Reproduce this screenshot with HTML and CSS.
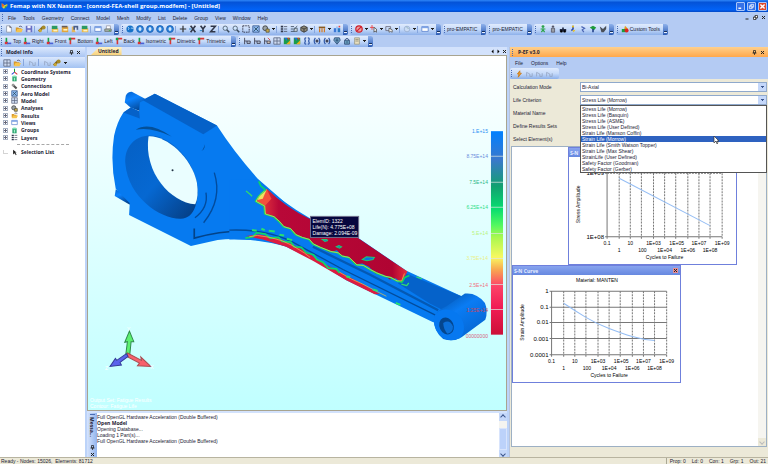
FILE: index.html
```html
<!DOCTYPE html>
<html lang="en">
<head>
<meta charset="utf-8">
<title>Femap with NX Nastran</title>
<link rel="stylesheet" href="styles.css">
</head>
<body>
<svg class="defs" aria-hidden="true">
  <symbol id="new" viewBox="0 0 10 10"><path d="M2 1h4l2 2v6H2z" fill="#fff" stroke="#8a93a8"/><path d="M6 1v2h2" fill="none" stroke="#556"/></symbol>
  <symbol id="open" viewBox="0 0 10 10"><path d="M1 3h3l1 1h3v4H1z" fill="#d99a2b"/><path d="M3 5h7L8 9H1z" fill="#f6c44e"/><path d="M5 2q3-2 4 1" fill="none" stroke="#557"/></symbol>
  <symbol id="save" viewBox="0 0 10 10"><path d="M1 1h8v8H1z" fill="#6a6fc4"/><path d="M3 1h4v3H3z" fill="#eef"/><path d="M3 6h4v3H3z" fill="#dde"/></symbol>
  <symbol id="key" viewBox="0 0 10 10"><path d="M1 8l5-5" stroke="#80641a" stroke-width="3"/><circle cx="7" cy="3" r="2.5" fill="#a58a2a"/><circle cx="3" cy="7" r="2" fill="#c8a838"/></symbol>
  <symbol id="boxg" viewBox="0 0 10 10"><path d="M1 4h8v5H1z" fill="#e9b84c"/><path d="M1 1h7v4H1z" fill="#2d9a62"/><path d="M3 6h5v2H3z" fill="#fff3c0"/></symbol>
  <symbol id="boxy" viewBox="0 0 10 10"><path d="M1 2h8v7H1z" fill="#e2a63c"/><path d="M1 1h7v2H1z" fill="#685c58"/><path d="M3 5h5v2H3z" fill="#fff3c0"/></symbol>
  <symbol id="boxb" viewBox="0 0 10 10"><path d="M1 2h5v7H1z" fill="#e2b65c"/><path d="M3 1h6v5H3z" fill="#4a5f8c"/><path d="M5 3h2v5H5z" fill="#dde6fa"/></symbol>
  <symbol id="window" viewBox="0 0 10 10"><path d="M1 2h8v6H1z" fill="#fff" stroke="#5a82cf"/><path d="M1 2h8v2H1z" fill="#7fa4e6"/></symbol>
  <symbol id="print" viewBox="0 0 10 10"><path d="M3 1h5v4H3z" fill="#fff" stroke="#99a"/><path d="M1 5h8v3H1z" fill="#aab2ab" stroke="#69726c"/><path d="M6 7h2" stroke="#3a3"/></symbol>
  <symbol id="globe" viewBox="0 0 10 10"><circle cx="5" cy="5" r="4.5" fill="#1672c8"/><path d="M2 2q3 2 1 4M6 4q3-1 3 1" stroke="#bfe0ff" fill="none"/></symbol>
  <symbol id="nav" viewBox="0 0 10 10"><circle cx="5" cy="5" r="4.3" fill="#2c84dc" stroke="#1a5db0"/><path d="M5 2.500v5M3 5h4" stroke="#fff" stroke-width="1.500"/></symbol>
  <symbol id="plus" viewBox="0 0 10 10"><path d="M5 1v8M1 5h8" stroke="#333" stroke-width="1.500"/></symbol>
  <symbol id="axx" viewBox="0 0 10 10"><path d="M2 1l6 8M8 1L2 9" stroke="#303648" stroke-width="2"/><path d="M0 5h3" stroke="#17b"/></symbol>
  <symbol id="axy" viewBox="0 0 10 10"><path d="M2 1l3 4 3-4M5 5v4" stroke="#303648" stroke-width="2" fill="none"/><path d="M1 7h3" stroke="#17b"/></symbol>
  <symbol id="axz" viewBox="0 0 10 10"><path d="M2 1.500h6l-6 7h6" stroke="#303648" stroke-width="2" fill="none"/></symbol>
  <symbol id="zoom" viewBox="0 0 10 10"><circle cx="4" cy="4" r="2.700" fill="#cfe6ff" stroke="#456"/><path d="M6 6l3 3" stroke="#3a4a5c" stroke-width="2"/></symbol>
  <symbol id="dash" viewBox="0 0 10 10"><path d="M1 1h8v8H1z" fill="none" stroke="#223" stroke-dasharray="2 1"/></symbol>
  <symbol id="fit" viewBox="0 0 10 10"><path d="M1 1h8v8H1z" fill="#8db8ee" stroke="#3a5a92"/><path d="M2 8l6-6M3 3l5 5" stroke="#245"/></symbol>
  <symbol id="mag" viewBox="0 0 10 10"><circle cx="4" cy="4" r="3" fill="#9ba4a8" stroke="#333"/><path d="M5 5h4v4H5z" fill="#c9a84a" stroke="#554"/></symbol>
  <symbol id="list" viewBox="0 0 10 10"><path d="M1 2h3M1 5h3M1 8h3" stroke="#30384c" stroke-width="2"/><path d="M5 2h4M5 5h4M5 8h4" stroke="#4a5266"/></symbol>
  <symbol id="edit" viewBox="0 0 10 10"><path d="M1 2h4M1 5h3M1 8h5" stroke="#345"/><path d="M5 6l4-5M5 4h4v4H5z" stroke="#456" fill="#cfd8df"/></symbol>
  <symbol id="cube" viewBox="0 0 10 10"><path d="M5 1l4 2v4L5 9 1 7V3z" fill="#8f8a78" stroke="#333"/><path d="M1 3l4 2 4-2M5 5v4" stroke="#333" fill="none"/></symbol>
  <symbol id="table" viewBox="0 0 10 10"><path d="M1 2h8v2H1z" fill="#8a5a20"/><path d="M2 4v5M5 4v5M8 4v5" stroke="#d27a24" stroke-width="1.500"/></symbol>
  <symbol id="bars" viewBox="0 0 10 10"><path d="M1 4h3v5H1z" fill="#3b78d8"/><path d="M4 2h2v7H4z" fill="#8fbdf6"/><path d="M6 4h3v5H6z" fill="#2878c4"/><path d="M7 1h2v2H7z" fill="#e44"/></symbol>
  <symbol id="ban" viewBox="0 0 10 10"><circle cx="5" cy="5" r="4" fill="#e9a0a0" stroke="#d01f2c" stroke-width="1.500"/><path d="M2 8l6-6" stroke="#d01f2c" stroke-width="1.500"/></symbol>
  <symbol id="pick" viewBox="0 0 10 10"><path d="M0 3h5M2.500 0v6" stroke="#e33"/><path d="M5 3v6l1.500-1.500L8 9V5z" fill="#fff" stroke="#444"/></symbol>
  <symbol id="sel" viewBox="0 0 10 10"><path d="M1 2h6v5H1z" fill="none" stroke="#667"/><path d="M5 4v5l2-1 2 1V6z" fill="#fff" stroke="#555"/></symbol>
  <symbol id="dim" viewBox="0 0 10 10"><circle cx="5" cy="5" r="3.500" fill="#cbdcf5" stroke="#97add0"/><path d="M4 2l3 3" stroke="#8aa"/></symbol>
  <symbol id="man" viewBox="0 0 10 10"><circle cx="5" cy="2" r="1.800" fill="#2aa34a"/><path d="M5 4v3M2 5h6M3 9l2-3 2 3" stroke="#2aa34a" stroke-width="1.500" fill="none"/></symbol>
  <symbol id="mang" viewBox="0 0 10 10"><circle cx="5" cy="2" r="1.500" fill="#556"/><path d="M3 4h4v5H3z" fill="#9aa0a8" stroke="#556"/></symbol>
  <symbol id="car" viewBox="0 0 10 10"><path d="M1 5h3V3h2v2h3v3H1z" fill="#1f2740"/><circle cx="3" cy="8" r="1.500"/><circle cx="7" cy="8" r="1.500"/></symbol>
  <symbol id="run" viewBox="0 0 10 10"><path d="M5 1v4L3 7" stroke="#2c49a8" stroke-width="2" fill="none"/><path d="M4 7l4-1-2 3z" fill="#e8c020"/><circle cx="5" cy="2" r="1.300" fill="#e8c020"/></symbol>
  <symbol id="fig" viewBox="0 0 10 10"><path d="M3 2l4 2-3 2 2 3" stroke="#4c66b4" stroke-width="1.500" fill="none"/></symbol>
  <symbol id="tree" viewBox="0 0 10 10"><path d="M1 3l4-2 4 2-3 4z" fill="#1f9c3c"/><path d="M5 5v4" stroke="#24408c" stroke-width="2"/></symbol>
  <symbol id="cat" viewBox="0 0 10 10"><path d="M1 2l4 3 4-4v4L6 9H3z" fill="#4a4f58"/></symbol>
  <symbol id="custom" viewBox="0 0 10 10"><path d="M1 5h5v4H1z" fill="#1f9c3c"/><path d="M5 1l4 4H4z" fill="#e0a020"/><circle cx="7" cy="7" r="2.500" fill="#d22"/></symbol>
  <symbol id="view" viewBox="0 0 10 10"><path d="M3 7V1" stroke="#17a34a" stroke-width="2"/><path d="M1 6h4v3H1z" fill="#d93636"/><path d="M4 8h5" stroke="#4a62d6" stroke-width="2"/></symbol>
  <symbol id="view2" viewBox="0 0 10 10"><path d="M2 2h7M3 2v7" stroke="#d93636" stroke-width="2"/><path d="M1 1h3v3H1z" fill="#17a34a"/></symbol>
  <symbol id="fem" viewBox="0 0 10 10"><path d="M2 1v8M2 5h3" stroke="#334" fill="none"/><path d="M5 5h4v3H5z" fill="#b5c3da" stroke="#334"/></symbol>
  <symbol id="femr" viewBox="0 0 10 10"><path d="M2 1v8M2 5h3" stroke="#334" fill="none"/><path d="M5 5h4v3H5z" fill="#dcb" stroke="#334"/><path d="M6 1l3 3" stroke="#d33"/></symbol>
  <symbol id="grid" viewBox="0 0 10 10"><path d="M1 1h8v8H1zM1 5h8M5 1v8" fill="#cfdcf2" stroke="#5b667e"/></symbol>
  <symbol id="contour" viewBox="0 0 10 10"><path d="M1 1h8v8H1z" fill="#1a9c4c"/><path d="M1 1h4v4z" fill="#2468dc"/><path d="M9 9H4l5-5z" fill="#e8b020"/><path d="M5 1h3v3z" fill="#e33"/></symbol>
  <symbol id="braces" viewBox="0 0 10 10"><path d="M4 1Q1 1 3 5 1 9 4 9M6 1q3 0 1 4 2 4-1 4" stroke="#2f58a8" stroke-width="1.500" fill="none"/></symbol>
  <symbol id="braces2" viewBox="0 0 10 10"><path d="M3 1Q0 5 3 9M7 1q3 4 0 8" stroke="#2f58a8" stroke-width="1.500" fill="none"/><path d="M3 5h4M5 3v4" stroke="#223" stroke-width="1.500"/></symbol>
  <symbol id="shield" viewBox="0 0 10 10"><path d="M2 1h6l1 3-4 5-4-5z" fill="#6ea6c4" stroke="#2a4470"/><path d="M3 4h4M5 2v5" stroke="#2a4470"/></symbol>
  <symbol id="lock" viewBox="0 0 10 10"><path d="M3 5V3q2-3 4 0v2" fill="none" stroke="#2a4470"/><path d="M2 4h6v5H2z" fill="#6ea6c4" stroke="#2a4470"/><path d="M5 5v3" stroke="#2a4470"/></symbol>
  <symbol id="doc" viewBox="0 0 10 10"><path d="M2 1h6v8H2z" fill="#e9dfbd" stroke="#998"/><path d="M3 3h4M3 5h4" stroke="#887"/></symbol>
  <symbol id="axes" viewBox="0 0 10 10"><path d="M5 6V1" stroke="#18a038" stroke-width="1.500"/><path d="M5 6L1 9" stroke="#2448d8" stroke-width="1.500"/><path d="M5 6l4 3" stroke="#d82c2c" stroke-width="1.500"/></symbol>
  <symbol id="geo" viewBox="0 0 10 10"><path d="M2 2h6v7H2z" fill="#23a06a"/><ellipse cx="5" cy="2" rx="3" ry="1.200" fill="#7fe0b4"/><path d="M4 4h2v4H4z" fill="#a6f0cc"/></symbol>
  <symbol id="conn" viewBox="0 0 10 10"><path d="M2 2l6 6" stroke="#555" stroke-width="3"/><circle cx="3" cy="3" r="2" fill="#999"/></symbol>
  <symbol id="arrow" viewBox="0 0 10 10"><path d="M3 1v7l2-2 2 3 1-1-2-3h2z" fill="#222"/></symbol>
  <symbol id="bolt" viewBox="0 0 10 10"><path d="M6 1L3 5h2L4 9l4-5H6z" fill="#f0a030" stroke="#c87818"/></symbol>
  <symbol id="ghost" viewBox="0 0 10 10"><path d="M2 8V3l4 2v3M6 8h3V4" fill="none" stroke="#94a3c0"/></symbol>
  <symbol id="pin" viewBox="0 0 10 10"><path d="M3 1h4v5H3zM1 6h8M5 6v4" fill="none" stroke="#222" stroke-width="1.500"/></symbol>
  <symbol id="close" viewBox="0 0 10 10"><path d="M2 2l6 6M8 2L2 8" stroke="#222" stroke-width="2"/></symbol>
  <symbol id="min" viewBox="0 0 10 10"><path d="M1 8h6" stroke="#222" stroke-width="2"/></symbol>
  <symbol id="restore" viewBox="0 0 10 10"><path d="M4 1h5v5H4zM1 4h5v5H1z" fill="#fff" stroke="#222" stroke-width="1.500"/></symbol>
</svg>

<header class="titlebar">
  <svg class="logo" viewBox="0 0 10 10" aria-hidden="true"><path d="M1 1l4 3 4-2v3L4 9 1 6z" fill="#d8d23c"/><path d="M1 1l4 3-3 3z" fill="#e85c2c"/><path d="M5 6l4-2-3 5z" fill="#38a04c"/></svg>
  <h1>Femap with NX Nastran - [conrod-FEA-shell group.modfem] - [Untitled]</h1>
  <div class="winbtns">
    <button aria-label="Minimize"><svg viewBox="0 0 10 10"><path d="M2 7.500h4" stroke="#fff" stroke-width="2"/></svg></button>
    <button aria-label="Restore"><svg viewBox="0 0 10 10"><path d="M4 2h4v4H4zM2 4h4v4H2z" fill="none" stroke="#fff"/></svg></button>
    <button class="shut" aria-label="Close"><svg viewBox="0 0 10 10"><path d="M2 2l6 6M8 2L2 8" stroke="#fff" stroke-width="2"/></svg></button>
  </div>
</header>

<nav class="menubar">
  <i class="grip"></i>
  <a href="#">File</a><a href="#">Tools</a><a href="#">Geometry</a><a href="#">Connect</a><a href="#">Model</a><a href="#">Mesh</a><a href="#">Modify</a><a href="#">List</a><a href="#">Delete</a><a href="#">Group</a><a href="#">View</a><a href="#">Window</a><a href="#">Help</a>
  <div class="docbtns"><button aria-label="Minimize document"><svg><use href="#min"/></svg></button><button aria-label="Restore document"><svg><use href="#restore"/></svg></button><button aria-label="Close document"><svg><use href="#close"/></svg></button></div>
</nav>

<div class="toolrow">
  <div class="toolbar"><i class="grip"></i>
    <button aria-label="New"><svg><use href="#new"/></svg></button><button aria-label="Open"><svg><use href="#open"/></svg></button><button aria-label="Save"><svg><use href="#save"/></svg></button><i class="sep"></i>
    <button aria-label="Key"><svg><use href="#key"/></svg></button><i class="sep"></i>
    <button aria-label="Import"><svg><use href="#boxg"/></svg></button><button aria-label="Export"><svg><use href="#boxy"/></svg></button><button aria-label="Analyze"><svg><use href="#boxb"/></svg></button><button aria-label="Results"><svg><use href="#boxg"/></svg></button><i class="sep"></i>
    <button aria-label="Copy window"><svg><use href="#window"/></svg></button><button aria-label="Print"><svg><use href="#print"/></svg></button><i class="cap"></i>
  </div>
  <div class="toolbar"><i class="grip"></i>
    <button aria-label="Dynamic rotate"><svg><use href="#globe"/></svg></button><button aria-label="Rotate up"><svg><use href="#nav"/></svg></button><button aria-label="Rotate down"><svg><use href="#nav"/></svg></button><button aria-label="Rotate left"><svg><use href="#nav"/></svg></button><button aria-label="Rotate right"><svg><use href="#nav"/></svg></button><i class="sep"></i>
    <button aria-label="Pan"><svg><use href="#plus"/></svg></button><button aria-label="X axis"><svg><use href="#axx"/></svg></button><button aria-label="Y axis"><svg><use href="#axy"/></svg></button><button aria-label="Z axis"><svg><use href="#axz"/></svg></button><i class="sep"></i>
    <button aria-label="Zoom in"><svg><use href="#zoom"/></svg></button><button aria-label="Zoom out"><svg><use href="#zoom"/></svg></button><button aria-label="Zoom box"><svg><use href="#dash"/></svg></button><button aria-label="Fit"><svg><use href="#fit"/></svg></button><button aria-label="Style"><svg><use href="#mag"/></svg></button><i class="drop"></i><i class="sep"></i>
    <button aria-label="List"><svg><use href="#list"/></svg></button><button aria-label="Edit"><svg><use href="#edit"/></svg></button><button aria-label="Solid"><svg><use href="#cube"/></svg></button><i class="drop"></i><i class="sep"></i>
    <button aria-label="Table"><svg><use href="#table"/></svg></button><i class="drop"></i><button aria-label="Chart"><svg><use href="#bars"/></svg></button><i class="cap"></i>
  </div>
  <div class="toolbar"><i class="grip"></i>
    <button aria-label="Select none"><svg><use href="#ban"/></svg></button><i class="drop"></i><button aria-label="Add to selection"><svg><use href="#pick"/></svg></button><i class="drop"></i><button aria-label="Select mode"><svg><use href="#sel"/></svg></button><i class="drop"></i><i class="sep"></i>
    <button aria-label="Filter"><svg><use href="#dim"/></svg></button><i class="drop"></i><i class="sep"></i>
    <button aria-label="Snap window"><svg><use href="#window"/></svg></button><i class="drop"></i><i class="cap"></i>
  </div>
  <div class="toolbar"><i class="grip"></i><button class="text">pro-EMPATIC</button><i class="cap"></i></div>
  <div class="toolbar"><i class="grip"></i><button class="text">pro-EMPATIC</button><i class="cap"></i></div>
  <div class="toolbar"><i class="grip"></i>
    <button aria-label="Start"><svg><use href="#man"/></svg></button><button aria-label="Stand"><svg><use href="#mang"/></svg></button><button aria-label="Drive"><svg><use href="#car"/></svg></button><button aria-label="Run"><svg><use href="#run"/></svg></button><button aria-label="Step"><svg><use href="#fig"/></svg></button><button aria-label="Tree"><svg><use href="#tree"/></svg></button><button aria-label="Clean"><svg><use href="#cat"/></svg></button><i class="cap"></i>
  </div>
  <div class="toolbar"><i class="grip"></i><button class="label"><svg><use href="#custom"/></svg>Custom Tools</button><i class="cap"></i></div>
</div>

<div class="toolrow">
  <div class="toolbar views"><i class="grip"></i>
    <button class="label"><svg><use href="#view"/></svg>Top</button><button class="label"><svg><use href="#view"/></svg>Right</button><button class="label"><svg><use href="#view"/></svg>Front</button><button class="label"><svg><use href="#view2"/></svg>Bottom</button><button class="label"><svg><use href="#view"/></svg>Left</button><button class="label"><svg><use href="#view2"/></svg>Back</button><button class="label"><svg><use href="#view"/></svg>Isometric</button><button class="label"><svg><use href="#view2"/></svg>Dimetric</button><button class="label"><svg><use href="#view2"/></svg>Trimetric</button><i class="cap"></i>
  </div>
  <div class="toolbar"><i class="grip"></i>
    <button aria-label="Constraint"><svg><use href="#fem"/></svg></button><button aria-label="Load"><svg><use href="#fem"/></svg></button><button aria-label="Delete load"><svg><use href="#femr"/></svg></button><button aria-label="Mesh"><svg><use href="#grid"/></svg></button><button aria-label="Contour"><svg><use href="#contour"/></svg></button><button aria-label="Criteria"><svg><use href="#contour"/></svg></button><button aria-label="Braces"><svg><use href="#braces"/></svg></button><button aria-label="Node"><svg><use href="#braces2"/></svg></button><button aria-label="Element"><svg><use href="#braces2"/></svg></button><button aria-label="Check"><svg><use href="#shield"/></svg></button><button aria-label="Lock"><svg><use href="#lock"/></svg></button><button aria-label="Report"><svg><use href="#doc"/></svg></button><i class="drop"></i><i class="cap"></i>
  </div>
</div>

<main class="workspace">
  <aside class="info">
    <header class="panehead"><i class="grip"></i><h2>Model Info</h2><button aria-label="Pin"><svg><use href="#pin"/></svg></button><button aria-label="Close"><svg><use href="#close"/></svg></button></header>
    <div class="infotools">
      <button aria-label="Tree view"><svg><use href="#grid"/></svg></button><button aria-label="Folder"><svg><use href="#open"/></svg></button><i class="sep"></i><button aria-label="Copy"><svg><use href="#ghost"/></svg></button><i class="sep"></i><button aria-label="Next"><svg><use href="#ghost"/></svg></button><button aria-label="Highlight"><svg><use href="#key"/></svg></button><i class="drop"></i>
    </div>
    <ul class="tree">
      <li><i class="exp"></i><svg><use href="#axes"/></svg>Coordinate Systems</li>
      <li><i class="exp"></i><svg><use href="#geo"/></svg>Geometry</li>
      <li><i class="exp"></i><svg><use href="#conn"/></svg>Connections</li>
      <li><i class="exp"></i><svg><use href="#fit"/></svg>Aero Model</li>
      <li><i class="exp"></i><svg><use href="#grid"/></svg>Model</li>
      <li><i class="exp"></i><svg><use href="#mag"/></svg>Analyses</li>
      <li><i class="exp"></i><svg><use href="#open"/></svg>Results</li>
      <li><i class="exp"></i><svg><use href="#window"/></svg>Views</li>
      <li><i class="exp"></i><svg><use href="#geo"/></svg>Groups</li>
      <li><i class="exp"></i><svg><use href="#list"/></svg>Layers</li>
      <li class="rule"></li>
      <li><i class="branch"></i><svg><use href="#arrow"/></svg>Selection List</li>
    </ul>
  </aside>

  <section class="center">
    <div class="tabs">
      <button class="tab">Untitled</button>
      <div class="tabnav"><button aria-label="Previous"><svg viewBox="0 0 10 10"><path d="M7 1v8L3 5z"/></svg></button><button aria-label="Next"><svg viewBox="0 0 10 10"><path d="M3 1v8l4-4z"/></svg></button><button aria-label="Close tab"><svg><use href="#close"/></svg></button></div>
    </div>
    <div class="viewport">
      <svg viewBox="89 57 417 353" role="img" aria-label="Fatigue life of the connecting rod">
        <defs>
          <linearGradient id="bore" x1="0" y1="0" x2="1" y2="1"><stop offset="0" stop-color="#0560c4"/><stop offset=".5" stop-color="#0668d2"/><stop offset="1" stop-color="#053a7c"/></linearGradient>
          <linearGradient id="pinf" x1="0" y1="0" x2=".4" y2="1"><stop offset="0" stop-color="#0461cc"/><stop offset=".4" stop-color="#0c83ff"/><stop offset="1" stop-color="#034694"/></linearGradient>
          <linearGradient id="eye" x1="0" y1="0" x2=".7" y2="1"><stop offset="0" stop-color="#044d9e"/><stop offset=".45" stop-color="#0a7cf4"/><stop offset="1" stop-color="#0464d0"/></linearGradient>
          <linearGradient id="legend" x1="0" y1="0" x2="0" y2="1"><stop offset="0" stop-color="#0080ff"/><stop offset=".14" stop-color="#3a78cc"/><stop offset=".27" stop-color="#12a070"/><stop offset=".38" stop-color="#06dc70"/><stop offset=".46" stop-color="#50f860"/><stop offset=".52" stop-color="#a8f850"/><stop offset=".62" stop-color="#f8f860"/><stop offset=".68" stop-color="#f8a850"/><stop offset=".76" stop-color="#fc4468"/><stop offset=".87" stop-color="#f01c54"/><stop offset="1" stop-color="#cc1038"/></linearGradient>
          <linearGradient id="life" x1="0" y1="0" x2="1" y2="0"><stop offset="0" stop-color="#f04440"/><stop offset=".15" stop-color="#b80838"/><stop offset=".9" stop-color="#b00432"/><stop offset="1" stop-color="#e83040"/></linearGradient>
        </defs>
        <g transform="translate(85 50) scale(.333333)">
          <path d="M125 140Q130 128 143 128L187 151 180 190 140 176 122 160Z" fill="url(#pinf)"/>
          <path d="M95 420L140 445 137 466 92 440Z" fill="url(#pinf)"/>
          <path d="M118 190L140 175 165 186 167 160 212 134 398 229Q450 310 520 388L640 492 800 620 660 600 600 590Q480 560 400 572L320 590 135 497 137 462 95 418Q78 340 90 260Q98 220 118 190Z" fill="#067af0"/>
          <path d="M175 153L212 134 398 229 357 255Z" fill="#0561c8"/>
          <path d="M118 190L140 175 165 186 167 208Z" fill="#0561c8"/>
          <path d="M155 242Q195 215 262 262Q200 232 155 242Z" fill="#045099"/>
          <path d="M357 281q8 10-5 24 16-8 5-24Z" fill="#04468c"/>
          <path d="M390 370Q415 450 358 520M365 430Q373 475 332 505" stroke="#034b9b" stroke-width="4" fill="none"/>
          <path d="M188 260C240 252 318 310 338 400C345 450 333 507 290 508C230 510 133 445 124 345C120 300 145 265 188 260Z" fill="url(#bore)"/>
          <path d="M195 261C245 259 322 322 338 400Q344 440 333 465C260 460 178 370 193 262Z" fill="#eafeff"/>
          <circle cx="265" cy="363" r="3" fill="#234"/>
          <path d="M330 537V566Q440 535 540 549 590 558 660 597" stroke="#034388" stroke-width="5" fill="none"/>
        </g>
        <g transform="translate(230 160) scale(.333333)">
          <path d="M84 62Q160 130 240 176L385 235 530 334 700 412 640 490 610 488 500 435 350 362 250 300 170 262Q110 238 0 240V60Z" fill="#067af0"/>
          <path d="M520 338L700 412 640 452 600 432 505 372Z" fill="#0562ca"/>
          <path d="M0 212Q110 208 190 248L340 330 620 468" stroke="#034c9c" stroke-width="4" fill="none"/>
          <path d="M250 262L420 345 625 452" stroke="#0459b4" stroke-width="7" fill="none"/>
          <path d="M112 88Q170 145 240 178L385 236 533 336 515 370 498 356 480 360 462 346 437 342 418 322 398 312 378 314 355 292 335 288 322 272 300 278 270 262 248 250 236 238 215 232 196 224 180 206 160 200 146 184 128 172 106 164 102 142 80 126 96 114Z" fill="url(#life)"/>
          <path d="M112 90L80 126 104 142 126 118Z" fill="#f4503c"/>
          <path d="M112 90L92 104 84 122 100 118Z" fill="#f0e060"/>
          <g fill="none" stroke-linejoin="bevel">
            <path d="M88 66l6 14 14 12-20 18-10 16 26 14 2 24 26 8 16 14 14 16 20 6 16 18 19 8 21 6 12 14 22 10 30 12 22 4 13 10 20 4 23 22 20 2 20 12 19 10 25 10 18 4 18 10 17 4 8-14 14-6" stroke="#0ad36a" stroke-width="5"/>
            <path d="M106 94l-18 18-8 14 26 14 2 24 26 8 16 14 14 16 20 6 16 18 19 8 21 6 12 14 22 10 30 12 22 4 13 10 20 4 23 22 20 2 20 12 19 10 25 10 18 4 18 10 14 0 8-22" stroke="#f4d850" stroke-width="2"/>
            <path d="M50 95l12 10 6 6M515 374l16 4 6-8M560 352l16 6" stroke="#30d870" stroke-width="4"/>
          </g>
          <path d="M50 230L90 225 150 238 190 255 240 282 262 300 320 332 400 374 450 403 435 404 350 362 250 304 170 262 100 240Z" fill="#dc1c40"/>
          <g fill="none" stroke-linejoin="bevel">
            <path d="M48 236l22-4 12-12 26 4 14 12 26-2 10 12 26 2 10 14 22 2 14 16 22 6 10 14 18 8 16 18 24 2 10 12" stroke="#10d868" stroke-width="5"/>
            <path d="M60 232l24-4 38 6 36 10 30 14 36 22 18 14M330 338l30 18 40 18 50 26 20 10" stroke="#f0c84a" stroke-width="2"/>
            <path d="M68 212l14 2M96 208l10 4M118 214l18 2M150 226l14 2M172 238l16 4M350 350l12 4M430 390l14 4M498 430l14 6" stroke="#28e070" stroke-width="6"/>
          </g>
          <g stroke="#20c870" stroke-width="3" fill="#0874e8"><path d="M398 300l12-8 24 2-4 6-18 4Z"/><path d="M320 262l8-4 8 4-6 4Z"/><path d="M278 240l14 0 2 4-8 2Z"/></g>
          <path d="M612 480Q614 455 650 440L705 402Q740 398 765 430 775 455 766 480L695 533Q670 548 640 538 612 515 612 480Z" fill="url(#eye)"/>
          <path d="M612 480C614 450 650 440 680 460C705 480 710 515 690 536Q650 552 628 524Q612 505 612 480Z" fill="#0678f0"/>
          <ellipse cx="650" cy="499" rx="21" ry="26" transform="rotate(-25 650 499)" fill="#04468e"/>
          <path d="M640 490q20-12 29 10 2 18-16 22-12-12-13-32Z" fill="#0b6fd8"/>
        </g>
        <g transform="translate(85 320) scale(.333333)">
          <path d="M125 105L137 105 141 66 149 66 136 34 122 68 130 66Z" fill="#5cf070" stroke="#2f8c4c" stroke-width="3"/>
          <path d="M130 100L172 122 170 112 200 140 160 138 166 130 128 110Z" fill="#f8606c" stroke="#a84c50" stroke-width="3"/>
          <path d="M127 102L132 110 108 128 112 136 78 140 94 116 98 122Z" fill="#5a62ec" stroke="#343c98" stroke-width="3"/>
        </g>
        <g class="axis"><text x="106" y="370">Z</text><text x="151" y="369">X</text><text x="128" y="331">Y</text><text x="91" y="402">Output Set: Fatigue Results</text><text x="91" y="408">Contour: Fatigue Life</text></g>
        <rect x="491" y="132" width="12" height="203" fill="url(#legend)"/>
        <path d="M491 157h12M491 183h12M491 208h12M491 234h12M491 259h12M491 285h12M491 310h12" stroke="#dfe8e0" stroke-width="1" opacity=".7"/>
        <g class="scale">
          <text x="488" y="134" fill="#2a90f4">1.E+15</text><text x="488" y="159" fill="#6a8cdc">8.75E+14</text><text x="488" y="185" fill="#2cb888">7.5E+14</text><text x="488" y="210" fill="#30e088">6.25E+14</text><text x="488" y="236" fill="#b8f480">5.E+14</text><text x="488" y="261" fill="#eaf088">3.75E+14</text><text x="488" y="287" fill="#f07080">2.5E+14</text><text x="488" y="312" fill="#c04868">1.25E+14</text><text x="488" y="338" fill="#d86080">00000000</text>
        </g>
        <rect x="311" y="217" width="48" height="21" fill="#06063e" stroke="#70708c" stroke-width="1"/>
        <g class="tip"><text x="313" y="224">ElemID: 1322</text><text x="313" y="230">Life(N): 4.775E+08</text><text x="313" y="236">Damage: 2.094E-09</text></g>
      </svg>
    </div>
    <section class="messages">
      <header class="sidehead"><i class="grip"></i><h2>Messa...</h2><button aria-label="Pin"><svg><use href="#pin"/></svg></button><button aria-label="Close"><svg><use href="#close"/></svg></button></header>
      <div class="log"><p>Full OpenGL Hardware Acceleration (Double Buffered)</p><p><b>Open Model</b></p><p>Opening Database...</p><p>Loading 1 Part(s)...</p><p>Full OpenGL Hardware Acceleration (Double Buffered)</p></div>
      <div class="scroll"><i class="up"></i><i class="thumb"></i><i class="down"></i></div>
    </section>
  </section>

  <section class="pef">
    <header class="pefhead"><i class="grip"></i><h2>P-EF v3.0</h2><button aria-label="Pin"><svg><use href="#pin"/></svg></button><button aria-label="Close"><svg><use href="#close"/></svg></button></header>
    <nav class="pefmenu"><a href="#">File</a><a href="#">Options</a><a href="#">Help</a></nav>
    <div class="peftools"><div class="toolbar"><i class="grip"></i><button aria-label="Run"><svg><use href="#bolt"/></svg></button><button aria-label="Plot"><svg><use href="#ghost"/></svg></button><button aria-label="Curve"><svg><use href="#ghost"/></svg></button><button aria-label="Export"><svg><use href="#ghost"/></svg></button></div></div>
    <form class="form">
      <label for="mode">Calculation Mode</label><select id="mode"><option>Bi-Axial</option></select>
      <label for="crit">Life Criterion</label>
      <div class="combo"><select id="crit"><option>Stress Life (Morrow)</option></select>
        <ul class="options" role="listbox" aria-label="Life Criterion">
          <li role="option">Stress Life (Morrow)</li><li role="option">Stress Life (Basquin)</li><li role="option">Stress Life (ASME)</li><li role="option">Stress Life (User Defined)</li><li role="option">Strain Life (Manson Coffin)</li><li role="option" aria-selected="true" class="on">Strain Life (Morrow)</li><li role="option">Strain Life (Smith Watson Topper)</li><li role="option">Strain Life (Max Shear)</li><li role="option">StrainLife (User Defined)</li><li role="option">Safety Factor (Goodman)</li><li role="option">Safety Factor (Gerber)</li>
        </ul>
        <svg class="cursor" viewBox="0 0 7 10" aria-hidden="true"><path d="M1 1v7l2-2 1 3 1-1-1-2h2z" fill="#fff" stroke="#333" stroke-width=".7"/></svg>
      </div>
      <span>Material Name</span><span></span>
      <span>Define Results Sets</span><span></span>
      <span>Select Element(s)</span><span></span>
    </form>
    <div class="desk">
      <div class="canvas">
        <article class="win stress">
          <header><h3>S-N</h3></header>
          <svg viewBox="570 157 164 106" role="img" aria-label="Stress amplitude against cycles to failure">
            <path class="gridline" d="M619 173v63M630 173v63M641 173v63M653 173v63M664 173v63M675 173v63M687 173v63M698 173v63M709 173v63M607 173h114M721 173v63"/>
            <path class="axisline" d="M607 173v63h114M605 173h2M605 236h2M607 236v2M619 236v2M630 236v2M641 236v2M653 236v2M664 236v2M675 236v2M687 236v2M698 236v2M709 236v2M721 236v2"/>
            <path class="curve" d="M619 178L709 225"/>
            <g class="ylab"><text x="604" y="175">1E+09</text><text x="604" y="238">1E+08</text></g>
            <g class="xlab"><text x="607" y="244">0.1</text><text x="630" y="244">10</text><text x="653" y="244">1E+03</text><text x="676" y="244">1E+05</text><text x="698" y="244">1E+07</text><text x="721" y="244">1E+09</text><text x="619" y="251">1</text><text x="642" y="251">100</text><text x="664" y="251">1E+04</text><text x="687" y="251">1E+06</text><text x="709" y="251">1E+08</text></g>
            <text class="name" x="664" y="258">Cycles to Failure</text>
            <text class="name" transform="translate(580 204) rotate(-90)">Stress Amplitude</text>
          </svg>
        </article>
        <article class="win strain">
          <header><h3>S-N Curve</h3><button aria-label="Close chart"><svg><use href="#close"/></svg></button></header>
          <svg viewBox="513 275 165 106" role="img" aria-label="Strain amplitude against cycles to failure">
            <path class="gridline" d="M563 291v63M574 291v63M585 291v63M597 291v63M608 291v63M619 291v63M631 291v63M642 291v63M653 291v63M665 291v63"/>
            <path class="axisline" d="M551 291v63h114M549 291h116M549 307h116M549 322h116M549 338h116M549 354h2M551 354v2M563 354v2M574 354v2M585 354v2M597 354v2M608 354v2M619 354v2M631 354v2M642 354v2M653 354v2M665 354v2"/>
            <path class="curve" d="M563 303Q575 311 585 317T608 328 631 336 653 340"/>
            <text class="name" x="596" y="282">Material: MANTEN</text>
            <g class="ylab"><text x="548" y="293">1</text><text x="548" y="309">0.1</text><text x="548" y="324">0.01</text><text x="548" y="340">0.001</text><text x="548" y="356">0.0001</text></g>
            <g class="xlab"><text x="551" y="362">0.1</text><text x="574" y="362">10</text><text x="597" y="362">1E+03</text><text x="620" y="362">1E+05</text><text x="642" y="362">1E+07</text><text x="665" y="362">1E+09</text><text x="563" y="369">1</text><text x="586" y="369">100</text><text x="608" y="369">1E+04</text><text x="631" y="369">1E+06</text><text x="653" y="369">1E+08</text></g>
            <text class="name" x="608" y="376">Cycles to Failure</text>
            <text class="name" transform="translate(524 322) rotate(-90)">Strain Amplitude</text>
          </svg>
        </article>
      </div>
      <div class="deskscroll"><i class="down"></i></div>
    </div>
  </section>
</main>

<footer class="status"><span class="ready">Ready - Nodes: 15026,&nbsp; Elements: 81712</span><span class="counts"><span>Prop: 0</span><span>Ld: 0</span><span>Con: 1</span><span>Grp: 1</span><span>Out: 21</span></span></footer>
</body>
</html>
```
FILE: styles.css
```css
* { box-sizing: border-box; }

body {
  margin: 0;
  height: 100vh;
  display: flex;
  flex-direction: column;
  overflow: hidden;
  background: #b5cdf5;
  color: #1c2234;
  font: 5px/6px "Liberation Sans", Arial, sans-serif;
}

h1, h2, h3, p, ul { margin: 0; padding: 0; font-size: inherit; }
ul { list-style: none; }
a { color: inherit; text-decoration: none; }
button {
  margin: 0;
  padding: 0;
  border: 0;
  background: none;
  color: inherit;
  font: inherit;
  display: flex;
  align-items: center;
}
button svg { width: 8px; height: 8px; display: block; }
h1, h2, h3, .tab, .tree, .log b { font-family: "Open Sans", "Liberation Sans", sans-serif; font-weight: 700; }
.defs { display: none; }

.titlebar {
  flex: none;
  height: 12px;
  display: flex;
  align-items: center;
  gap: 2px;
  padding: 0 1px;
  background: linear-gradient(#2f86f8, #0453d8 20%, #0262f6 80%, #0348c4);
  color: #fff;
}
.titlebar h1 { flex: 1; font-size: 6px; line-height: 8px; }
.logo { width: 7px; height: 8px; }
.winbtns { display: flex; gap: 2px; }
.winbtns button { width: 9px; height: 9px; border: 1px solid #a9c6f8; border-radius: 1px; background: #3672e8; }
.winbtns svg { width: 7px; height: 7px; }
.winbtns .shut { background: #dc4a2c; }

.menubar { flex: none; height: 11px; display: flex; align-items: center; gap: 7px; background: #b4cbf3; }
.menubar .grip { margin: 0 -3px 0 2px; }
.docbtns { margin-left: auto; padding-right: 2px; display: flex; gap: 3px; }
.docbtns svg { width: 5px; height: 5px; }

.grip { flex: none; width: 2px; height: 7px; margin: 0 1px; background: repeating-linear-gradient(#4a6cb4 0 1px, transparent 1px 2px) 0 0 / 1px 100% no-repeat; }
.toolrow { flex: none; height: 12px; display: flex; align-items: center; gap: 2px; background: #b4cbf3; }
.toolbar {
  height: 11px;
  display: flex;
  align-items: center;
  border-radius: 2px;
  background: linear-gradient(#e0ebfd, #c4d9f9 50%, #8cb0ea);
}
.toolbar button { flex: none; min-width: 10px; justify-content: center; }
.toolbar .text { padding: 0 3px 0 0; }
.toolbar .label { gap: 1px; padding: 0 2px 0 1px; }
.toolbar.views .label { padding: 0 2px 0 0; }
.views .cap { margin-left: 3px; }
.cap {
  align-self: stretch;
  width: 5px;
  margin-left: 1px;
  border-radius: 0 2px 2px 0;
  background: linear-gradient(transparent 7px, #16305c 7px 8px, #e8f0ff 8px 9px, transparent 9px) 1px 0 / 3px 100% no-repeat, linear-gradient(#8fb2ec, #2c5cb4);
}
.sep { width: 3px; height: 7px; border-left: 1px solid #86a6de; }
.drop { width: 5px; height: 2px; background: linear-gradient(#222, #222) 1px 0 / 3px 1px no-repeat, linear-gradient(#222, #222) 2px 1px / 1px 1px no-repeat; }

.workspace { flex: 1; min-height: 0; display: grid; grid-template-columns: 85px minmax(0, 1fr) 259px; gap: 2px; background: #bcd3f9; }

.info { display: flex; flex-direction: column; background: #fff; }
.panehead { height: 10px; flex: none; display: flex; align-items: center; padding: 0 4px 0 0; gap: 2px; background: linear-gradient(#dde9fd, #a9c5f3); }
.panehead h2, .pefhead h2 { flex: 1; }
.panehead svg, .pefhead svg { width: 5px; height: 5px; }
.infotools { height: 11px; flex: none; display: flex; align-items: center; gap: 2px; padding-left: 3px; background: linear-gradient(#dbe8fd, #a3c2f2); }
.tree { display: grid; grid-auto-rows: 1fr; height: 88px; padding-left: 3px; }
.tree li { display: flex; align-items: center; gap: 3px; white-space: nowrap; }
.tree svg { width: 7px; height: 7px; }
.exp { width: 5px; height: 5px; border: 1px solid #a8b2c4; background: linear-gradient(#667, #667) center / 3px 1px no-repeat, linear-gradient(#667, #667) center / 1px 3px no-repeat, #fff; }
.tree .rule { align-self: center; margin: 0 16px 0 14px; border-top: 1px dashed #a8a8a8; }
.branch { width: 5px; height: 4px; border: solid #d4d4d4; border-width: 0 0 1px 1px; }

.center { min-width: 0; display: flex; flex-direction: column; background: #d3e2fc; }
.tabs { height: 8px; flex: none; display: flex; justify-content: space-between; align-items: end; }
.tab { height: 8px; margin-left: 4px; padding: 0 3px 0 7px; background: linear-gradient(#fff3c8, #f8d27c); clip-path: polygon(8px 0, 100% 0, 100% 100%, 0 100%); }
.tabnav { display: flex; gap: 1px; align-self: center; }
.tabnav svg { width: 5px; height: 5px; }
.viewport { flex: 1; min-height: 0; border: 1px solid #a8a490; background: linear-gradient(#fff, #c0ffff); }
.viewport > svg { display: block; width: 100%; height: 100%; }
.axis { fill: #fff; }
.scale { text-anchor: end; }
.tip { fill: #fff; }

.messages { flex: none; height: 45px; margin-top: 2px; display: flex; background: #fff; }
.sidehead { flex: none; width: 10px; display: flex; flex-direction: column; align-items: center; gap: 2px; padding: 1px; background: linear-gradient(90deg, #d5e3fc, #92b4ee); }
.sidehead .grip { width: 5px; height: 1px; background: #4a6cb4; }
.sidehead h2 { flex: 1; writing-mode: vertical-rl; }
.sidehead svg { width: 5px; height: 5px; }
.log { flex: 1; padding-top: 1px; }
.scroll { width: 8px; display: flex; flex-direction: column; background: #f4f4f0; }
.scroll .thumb { flex: 1; margin-top: 7px; background: #bcd2fa; border: 1px solid #d8e4fc; }
.up, .down { height: 8px; display: grid; place-items: center; background: #c5d8fa; }
.up::before, .down::before { content: ""; width: 3px; height: 3px; border: solid #3b558c; border-width: 1px 0 0 1px; rotate: 45deg; }
.down::before { rotate: 225deg; }

.pef { min-width: 0; display: flex; flex-direction: column; background: #ece9d8; border-left: 1px solid #b8c4dc; }
.pefhead { height: 10px; flex: none; display: flex; align-items: center; gap: 3px; padding: 0 3px 0 1px; background: linear-gradient(#ffd08c, #ffa84c); }
.pefmenu { height: 11px; flex: none; display: flex; align-items: center; gap: 8px; padding-left: 5px; background: #b4cbf3; }
.peftools { height: 11px; flex: none; background: #b4cbf3; }
.peftools .toolbar { width: 49px; }
.form { flex: none; display: grid; grid-template-columns: 67px minmax(0, 1fr); grid-auto-rows: 10px; row-gap: 3px; align-items: center; padding: 3px 1px 2px 3px; }
.form select {
  display: block;
  width: 100%;
  height: 10px;
  padding: 0 0 0 1px;
  border: 1px solid #8fa9cc;
  border-radius: 0;
  appearance: none;
  color: inherit;
  font: inherit;
  background: linear-gradient(#3b558c, #3b558c) right 3px top 4px / 1px 1px no-repeat, linear-gradient(#3b558c, #3b558c) right 2px top 3px / 3px 1px no-repeat, linear-gradient(#c5d8fa, #c5d8fa) right / 8px 100% no-repeat, #fff;
}
.combo { position: relative; }
.options { position: absolute; z-index: 5; top: 10px; left: 0; right: 0; background: #fff; border: 1px solid #555; }
.options li { height: 6px; padding-left: 1px; }
.options .on { background: #2e62c0; color: #fff; }
.cursor { position: absolute; z-index: 6; top: 40px; right: 47px; width: 7px; height: 10px; }

.desk { flex: 1; min-height: 0; display: flex; margin: 0 1px 11px 1px; background: #fff; border: 1px solid #9db0c4; }
.canvas { flex: 1; position: relative; }
.deskscroll { width: 8px; display: flex; align-items: end; background: #f6f5f0; }
.deskscroll .down { width: 8px; background: #ece9d8; }
.deskscroll .down::before { border-color: #bbb; }
.win { position: absolute; width: 169px; border: 1px solid #6f80dc; background: #fff; }
.win header { height: 9px; display: flex; align-items: center; justify-content: space-between; padding: 0 2px 0 1px; background: linear-gradient(#88a4ee, #6688e0); color: #e4ecff; }
.win header svg { width: 5px; height: 5px; background: #e88c90; }
.win > svg { display: block; width: 100%; height: 107px; }
.stress { left: 56px; top: 0; }
.strain { left: 0; top: 118px; }
.gridline { fill: none; stroke: #777; stroke-dasharray: 2 1; }
.axisline { fill: none; stroke: #777; }
.curve { fill: none; stroke: #94bdf4; }
.ylab { text-anchor: end; font-size: 6px; }
.xlab, .name { text-anchor: middle; }

.status { flex: none; height: 7px; display: flex; justify-content: space-between; padding: 0 2px 0 1px; background: #ece9d8; border-top: 1px solid #b8b4a0; }
.counts { display: flex; gap: 6px; padding-left: 3px; border-left: 1px solid #aaa894; }
```
